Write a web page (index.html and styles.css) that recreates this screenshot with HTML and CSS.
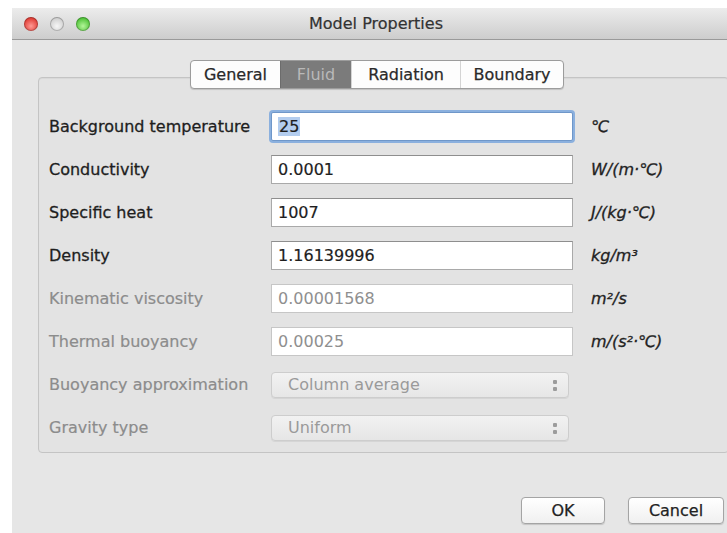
FILE: index.html
```html
<!DOCTYPE html>
<html>
<head>
<meta charset="utf-8">
<title>Model Properties</title>
<link rel="stylesheet" href="styles.css">
</head>
<body>
<div class="window">
  <div class="titlebar">
    <div class="lights">
      <span class="light red"></span>
      <span class="light grey"></span>
      <span class="light green"></span>
    </div>
    <div class="title">Model Properties</div>
  </div>
  <div class="content">
    <div class="tabs">
      <span class="tab">General</span>
      <span class="tab active">Fluid</span>
      <span class="tab">Radiation</span>
      <span class="tab">Boundary</span>
    </div>
    <div class="group">
      <div class="form">
        <label class="label">Background temperature</label>
        <div class="field focus"><span class="sel">25</span></div>
        <span class="unit">℃</span>

        <label class="label">Conductivity</label>
        <div class="field">0.0001</div>
        <span class="unit">W/(m·℃)</span>

        <label class="label">Specific heat</label>
        <div class="field">1007</div>
        <span class="unit">J/(kg·℃)</span>

        <label class="label">Density</label>
        <div class="field">1.16139996</div>
        <span class="unit">kg/m³</span>

        <label class="label off">Kinematic viscosity</label>
        <div class="field off">0.00001568</div>
        <span class="unit">m²/s</span>

        <label class="label off">Thermal buoyancy</label>
        <div class="field off">0.00025</div>
        <span class="unit">m/(s²·℃)</span>

        <label class="label off">Buoyancy approximation</label>
        <div class="select">Column average<span class="arrows"><i></i><i></i></span></div>
        <span class="unit"></span>

        <label class="label off">Gravity type</label>
        <div class="select">Uniform<span class="arrows"><i></i><i></i></span></div>
        <span class="unit"></span>
      </div>
    </div>
    <div class="buttons">
      <button class="btn ok">OK</button>
      <button class="btn cancel">Cancel</button>
    </div>
  </div>
</div>
</body>
</html>
```

FILE: styles.css
```css
html, body {
  margin: 0;
  padding: 0;
  background: #ffffff;
  overflow: hidden;
}

body {
  font-family: "DejaVu Sans", "Liberation Sans", sans-serif;
  font-size: 16px;
  color: #222;
}

.window {
  margin: 8px 0 0 12px;
  width: 728px;
  height: 525px;
  background: #e6e6e6;
  display: flex;
  flex-direction: column;
}

.titlebar {
  height: 31px;
  background: linear-gradient(#ececec, #cdcdcd);
  border-bottom: 1px solid #9a9a9a;
  display: flex;
  align-items: center;
  position: relative;
}

.lights {
  display: flex;
  gap: 12px;
  padding-left: 12px;
  margin-top: 1px;
}

.light {
  width: 14px;
  height: 14px;
  border-radius: 50%;
  box-shadow: inset 0 0 0 1px rgba(0,0,0,0.22);
}
.light.red { background: radial-gradient(circle at 50% 65%, #ff9a94, #e2423b 65%, #b8302a); }
.light.grey { background: radial-gradient(circle at 50% 65%, #f6f6f6, #d2d2d2 65%, #ababab); }
.light.green { background: radial-gradient(circle at 50% 65%, #b4f59a, #55c63d 65%, #379a28); }

.title {
  position: absolute;
  left: 0;
  right: 0;
  text-align: center;
  font-size: 16px;
  color: #333;
  -webkit-text-stroke: 0.2px #333;
}

.content {
  flex: 1;
  padding: 20px 11px 0 26px;
  display: flex;
  flex-direction: column;
}

.tabs {
  align-self: flex-start;
  margin-left: 152px;
  display: flex;
  height: 27px;
  background: #fdfdfd;
  border: 1px solid #9c9c9c;
  border-radius: 4px;
  box-shadow: 0 1px 1px rgba(0,0,0,0.15);
  position: relative;
  z-index: 1;
  overflow: hidden;
}

.tab {
  display: flex;
  align-items: center;
  justify-content: center;
  font-size: 16px;
  color: #2a2a2a;
  -webkit-text-stroke: 0.25px #2a2a2a;
  border-left: 1px solid #d4d4d4;
}
.tab:first-child { border-left: none; width: 89px; }
.tab:nth-child(2) { width: 70px; }
.tab:nth-child(3) { width: 108px; }
.tab:nth-child(4) { width: 102px; }
.tab.active {
  background: #7b7b7b;
  color: #b9b9b9;
  -webkit-text-stroke: 0;
  border-left-color: #6c6c6c;
}

.group {
  margin-top: -12px;
  height: 376px;
  border: 1px solid #c4c4c4;
  border-radius: 4px;
  background: #e3e3e3;
  box-shadow: inset 0 1px 1px rgba(0,0,0,0.05);
  box-sizing: border-box;
}

.form {
  display: grid;
  grid-template-columns: 222px 302px auto;
  grid-auto-rows: 29px;
  row-gap: 14px;
  column-gap: 0;
  padding: 34px 0 0 10px;
  align-items: center;
}

.label {
  font-size: 16px;
  color: #1e1e1e;
  -webkit-text-stroke: 0.3px #1e1e1e;
}
.label.off {
  color: #8c8c8c;
  -webkit-text-stroke: 0.2px #8c8c8c;
}

.field {
  height: 29px;
  box-sizing: border-box;
  background: #fff;
  border: 1px solid #a9a9a9;
  border-top-color: #8e8e8e;
  padding: 0 6px;
  display: flex;
  align-items: center;
  font-size: 16px;
  color: #1e1e1e;
  -webkit-text-stroke: 0.2px #1e1e1e;
}
.field.off {
  color: #8f8f8f;
  -webkit-text-stroke: 0;
  border-color: #c6c6c6;
}
.field.focus {
  border: 1px solid #6f97c9;
  box-shadow: 0 0 0 2px #8bb0de;
  border-radius: 2px;
}
.sel {
  background: #b3cdef;
  padding: 0 1px;
}

.unit {
  padding-left: 18px;
  font-style: italic;
  font-size: 16px;
  color: #222;
  -webkit-text-stroke: 0.3px #222;
}

.select {
  width: 298px;
  height: 26px;
  box-sizing: border-box;
  border: 1px solid #cdcdcd;
  border-radius: 4px;
  background: linear-gradient(#f2f2f2, #e6e6e6);
  box-shadow: 0 1px 0 rgba(0,0,0,0.06);
  display: flex;
  align-items: center;
  padding: 0 0 0 16px;
  font-size: 16px;
  color: #9a9a9a;
  position: relative;
}
.arrows {
  position: absolute;
  right: 11px;
  top: 7px;
  display: flex;
  flex-direction: column;
  gap: 3px;
}
.arrows i {
  width: 4px;
  height: 4px;
  background: #9c9c9c;
  border-radius: 1px;
}

.buttons {
  display: flex;
  justify-content: flex-end;
  gap: 23px;
  margin-top: 44px;
  padding-right: 5px;
}

.btn {
  height: 27px;
  box-sizing: border-box;
  border: 1px solid #a4a4a4;
  border-radius: 4px;
  background: linear-gradient(#ffffff, #f0f0f0);
  box-shadow: 0 1px 1px rgba(0,0,0,0.15);
  font-family: "DejaVu Sans", "Liberation Sans", sans-serif;
  font-size: 16px;
  color: #222;
  -webkit-text-stroke: 0.25px #222;
  padding: 0;
}
.btn.ok { width: 84px; }
.btn.cancel { width: 96px; }
```
